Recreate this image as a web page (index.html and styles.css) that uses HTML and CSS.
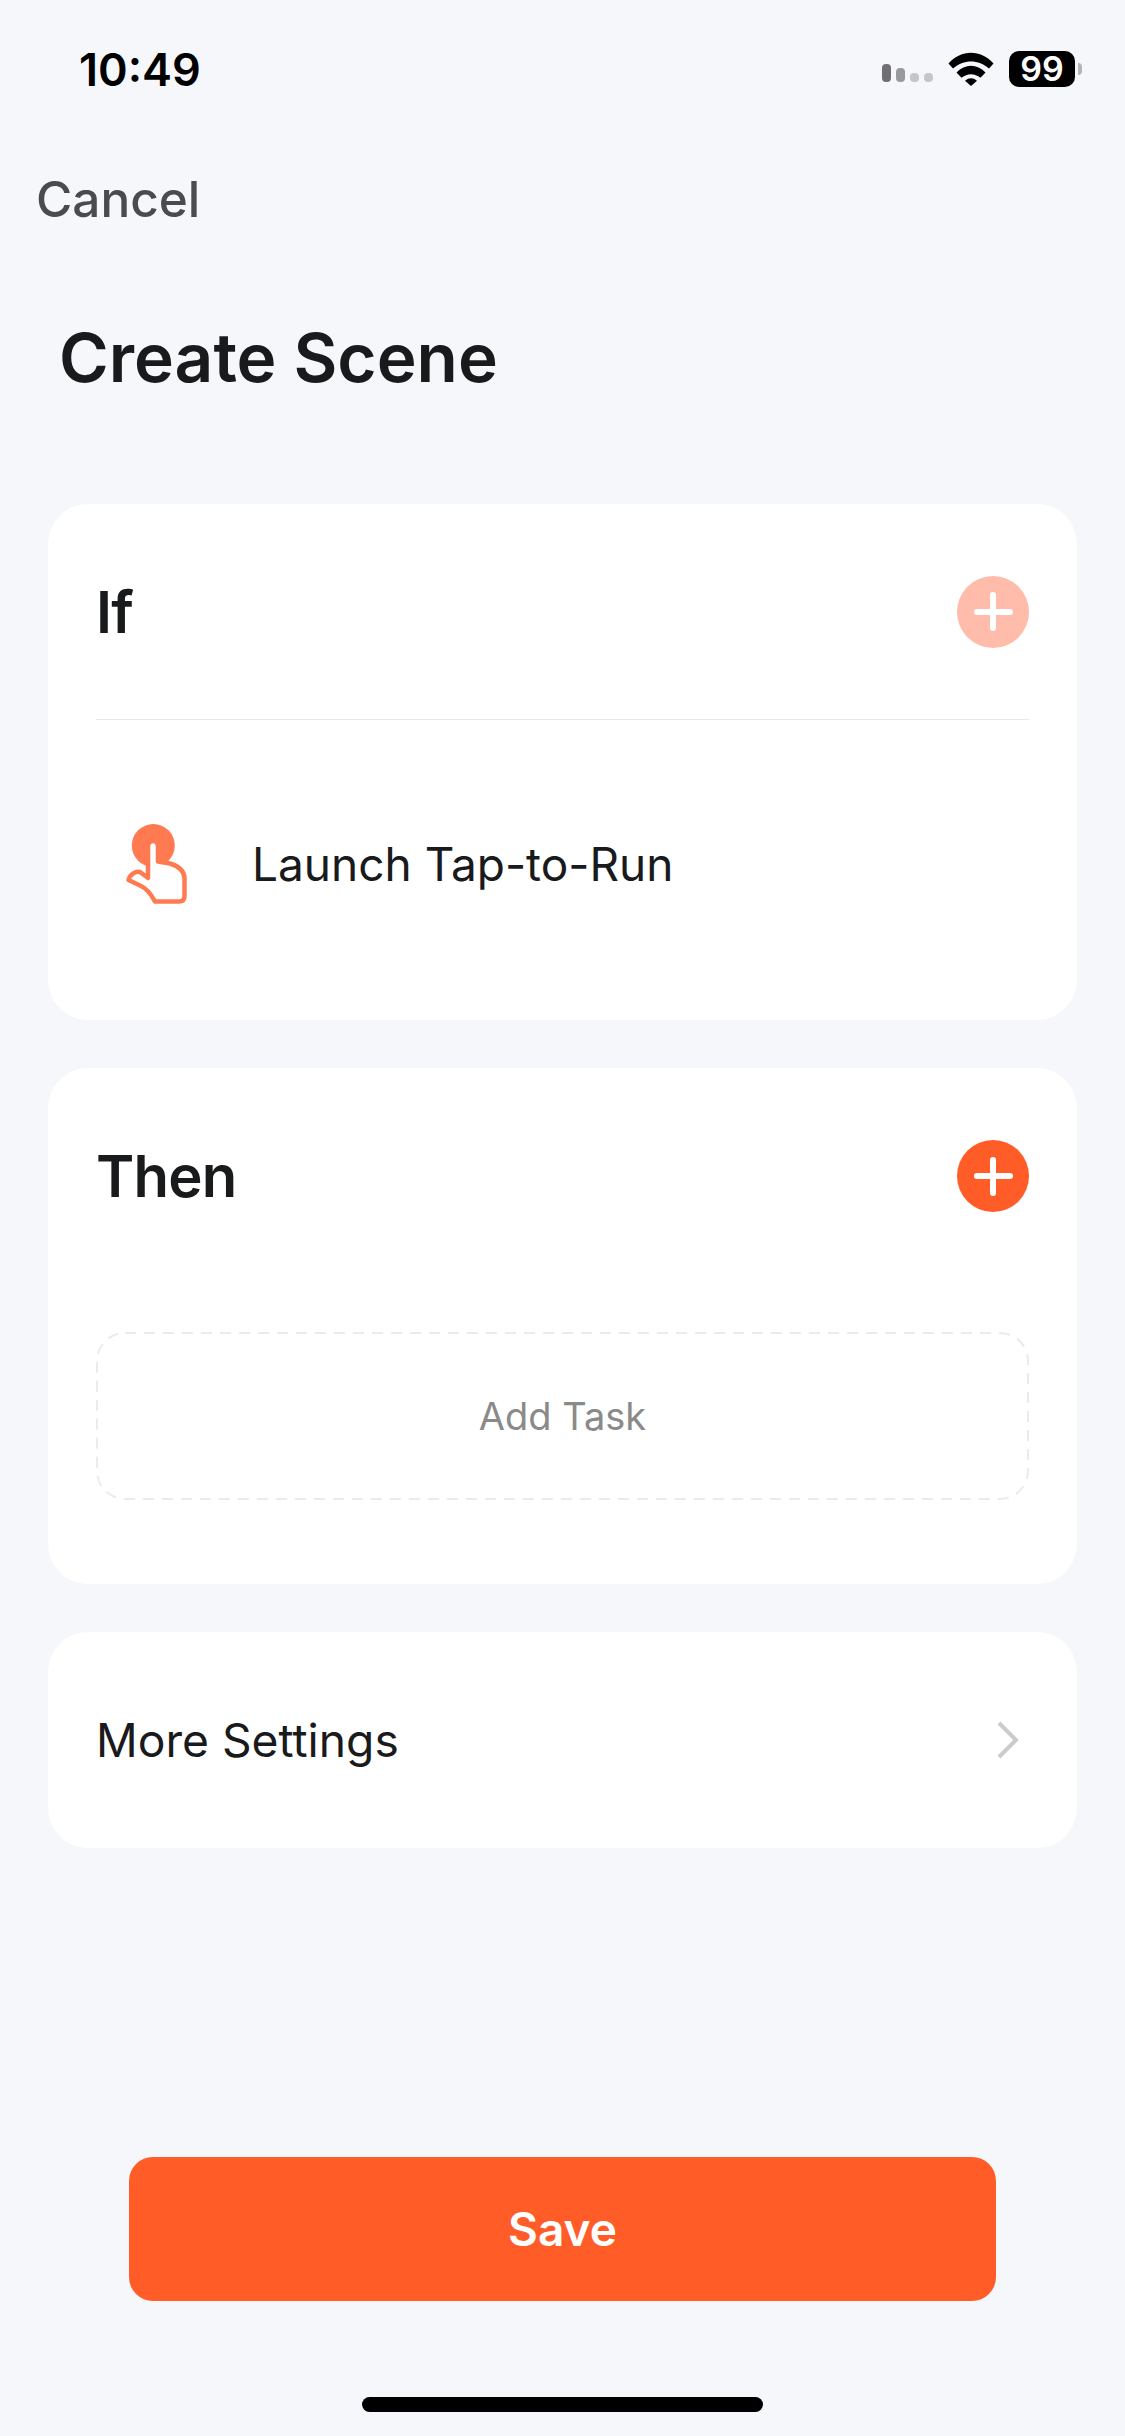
FILE: index.html
```html
<!DOCTYPE html>
<html lang="en">
<head>
    <meta charset="UTF-8">
    <meta name="viewport" content="width=device-width, initial-scale=1.0">
    <title>Create Scene</title>
    <link rel="stylesheet" href="styles.css">
</head>
<body>
    <div class="page">
        <div class="status-bar">
            <span class="time">10:49</span>
            <div class="status-icons">
                <div class="signal">
                    <span class="bar bar-1"></span>
                    <span class="bar bar-2"></span>
                    <span class="bar bar-3"></span>
                    <span class="bar bar-3"></span>
                </div>
                <svg class="wifi" width="46" height="34" viewBox="0 0 46 34">
                    <path d="M0.5 11.5 C13 -3 33 -3 45.5 11.5 L41 16.5 C30.5 7 15.5 7 5 16.5 Z" fill="#000"/>
                    <path d="M8.5 20.5 C17 11.5 29 11.5 37.5 20.5 L32.5 25.8 C26.5 21 19.5 21 13.5 25.8 Z" fill="#000"/>
                    <path d="M17 28.8 C21 25.5 25 25.5 29 28.8 L23 34 Z" fill="#000"/>
                </svg>
                <div class="battery">
                    <span class="battery-body">99</span>
                    <span class="battery-cap"></span>
                </div>
            </div>
        </div>

        <div class="nav">Cancel</div>
        <h1 class="title">Create Scene</h1>

        <div class="cards">
            <div class="card">
                <div class="card-head card-head-line">
                    <span class="card-title">If</span>
                    <span class="add-btn add-btn-off"><span class="plus"></span></span>
                </div>
                <div class="condition">
                    <svg class="hand" width="72" height="88" viewBox="30 30 72 88">
                        <circle cx="63.3" cy="55.5" r="21.5" fill="#ff7a50"/>
                        <path d="M58 88 L58 57 C58 49 68 49 68 57 L68 71.5 L80 73.5 C88 76 94 80 94.5 88 L94.5 106 C94.5 110 92 111.5 89 111.5 L65 111.5 C61 104 56 98 50 95.5 L38.5 90 C40 84 46 81 50 82 Z" fill="#fff" stroke="#ff7a50" stroke-width="4.5" stroke-linejoin="round"/>
                    </svg>
                    <span class="condition-text">Launch Tap-to-Run</span>
                </div>
            </div>

            <div class="card">
                <div class="card-head">
                    <span class="card-title">Then</span>
                    <span class="add-btn"><span class="plus"></span></span>
                </div>
                <div class="task-box">
                    <svg class="task-border" width="933" height="168" viewBox="0 0 933 168">
                        <rect x="1" y="1" width="931" height="166" rx="28" fill="none" stroke="#ebebeb" stroke-width="2" stroke-dasharray="11 8"/>
                    </svg>
                    Add Task
                </div>
            </div>

            <div class="card settings">
                <span class="settings-text">More Settings</span>
                <svg class="chevron" width="22" height="38" viewBox="0 0 22 38">
                    <path d="M2 2 L19 19 L2 36" fill="none" stroke="#cbcbcb" stroke-width="4"/>
                </svg>
            </div>
        </div>

        <div class="footer">
            <button class="save-btn">Save</button>
            <div class="home-bar"></div>
        </div>
    </div>
</body>
</html>
```
FILE: styles.css
```css
* {
    box-sizing: border-box;
}
body {
    margin: 0;
    background: #f6f7fb;
    font-family: Inter, "Liberation Sans", sans-serif;
    color: #191a1c;
}
.page {
    width: 1125px;
    height: 2436px;
    display: flex;
    flex-direction: column;
    overflow: hidden;
}

/* status bar */
.status-bar {
    height: 138px;
    padding: 0 43px 0 79px;
    display: flex;
    align-items: center;
    justify-content: space-between;
}
.time {
    font-size: 45px;
    font-weight: 600;
    color: #000;
}
.status-icons {
    display: flex;
    align-items: center;
}
.signal {
    display: flex;
    align-items: flex-end;
    gap: 5px;
    height: 18px;
    margin-top: 8px;
    margin-right: 15px;
}
.bar {
    width: 9px;
    border-radius: 4px;
}
.bar-1 {
    height: 18px;
    background: #707073;
}
.bar-2 {
    height: 14px;
    background: #9a9a9d;
}
.bar-3 {
    height: 9px;
    background: #c6c6c9;
}
.wifi {
    margin-right: 15px;
}
.battery {
    display: flex;
    align-items: center;
    gap: 3px;
}
.battery-body {
    width: 66px;
    height: 36px;
    border-radius: 10px;
    background: #000;
    color: #fff;
    font-size: 34px;
    font-weight: 600;
    line-height: 36px;
    text-align: center;
}
.battery-cap {
    width: 4px;
    height: 12px;
    border-radius: 0 6px 6px 0;
    background: #b5b5b8;
}

/* header */
.nav {
    height: 122px;
    padding-left: 36px;
    font-size: 49.5px;
    font-weight: 500;
    line-height: 123px;
    color: #4a4b4f;
}
.title {
    height: 196px;
    margin: 0;
    padding-left: 59px;
    font-size: 67.5px;
    font-weight: 600;
    line-height: 196px;
}

/* cards */
.cards {
    margin: 48px 48px 0;
    display: flex;
    flex-direction: column;
    gap: 48px;
}
.card {
    background: #fff;
    border-radius: 40px;
    padding: 0 48px;
    height: 516px;
}
.card-head {
    height: 216px;
    display: flex;
    align-items: center;
    justify-content: space-between;
}
.card-head-line {
    border-bottom: 1px solid #e8e8e8;
}
.card-title {
    font-size: 58px;
    font-weight: 600;
    letter-spacing: -0.75px;
}
.add-btn {
    width: 72px;
    height: 72px;
    border-radius: 50%;
    background: #ff5c28;
    display: flex;
    align-items: center;
    justify-content: center;
}
.add-btn-off {
    background: #ffbcaa;
}
.plus {
    position: relative;
    width: 39px;
    height: 6px;
    border-radius: 3px;
    background: #fff;
}
.plus::after {
    content: "";
    position: absolute;
    left: 16.5px;
    top: -16.5px;
    width: 6px;
    height: 39px;
    border-radius: 3px;
    background: #fff;
}
.condition {
    height: 288px;
    display: flex;
    align-items: center;
    gap: 60px;
    padding-left: 24px;
}
.condition-text {
    font-size: 46px;
}
.task-box {
    position: relative;
    height: 168px;
    margin-top: 48px;
    display: flex;
    align-items: center;
    justify-content: center;
    font-size: 38px;
    color: #8a8a8a;
}
.task-border {
    position: absolute;
    left: 0;
    top: 0;
}
.settings {
    height: 216px;
    display: flex;
    align-items: center;
    justify-content: space-between;
    padding-right: 58px;
}
.settings-text {
    font-size: 46.2px;
}

/* footer */
.footer {
    margin-top: auto;
    display: flex;
    flex-direction: column;
    align-items: center;
}
.save-btn {
    width: 867px;
    height: 144px;
    border: none;
    border-radius: 24px;
    background: #ff5c28;
    color: #fff;
    font-family: inherit;
    font-size: 46px;
    font-weight: 600;
}
.home-bar {
    width: 401px;
    height: 15px;
    margin: 96px 0 24px;
    border-radius: 8px;
    background: #000;
}
```
